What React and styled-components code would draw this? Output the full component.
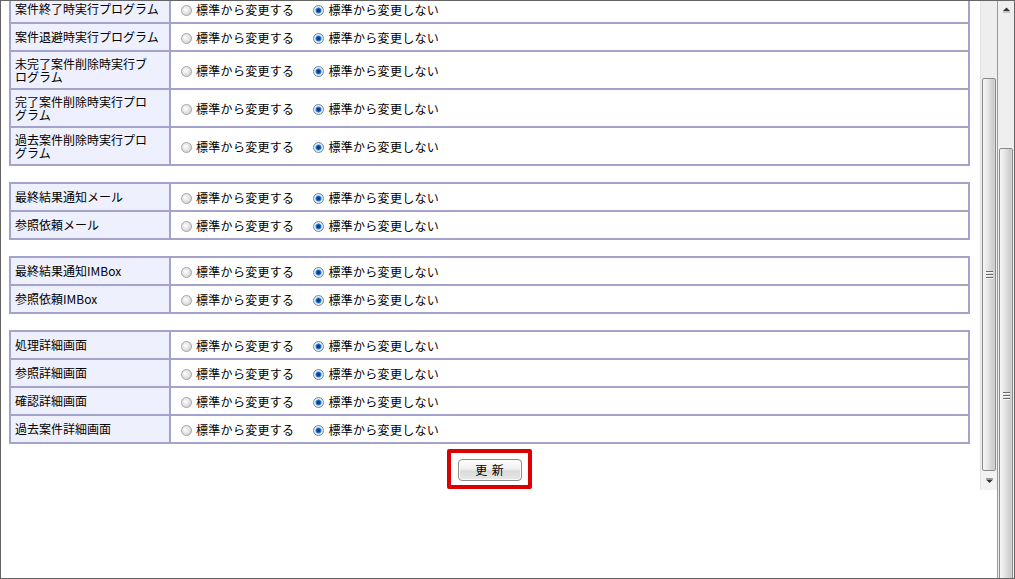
import React from "react";
import styled, { createGlobalStyle } from "styled-components";

const GlobalStyle = createGlobalStyle`
  html, body {
    margin: 0;
    padding: 0;
    background: #ffffff;
  }
  body {
    font-family: "Noto Sans CJK JP", "DejaVu Sans", sans-serif;
    font-size: 12px;
    color: #000;
  }
`;

// groups of settings, labels split where the original wraps
const groups = [
  [
    ["案件終了時実行プログラム"],
    ["案件退避時実行プログラム"],
    ["未完了案件削除時実行ブ", "ログラム"],
    ["完了案件削除時実行プロ", "グラム"],
    ["過去案件削除時実行プロ", "グラム"],
  ],
  [["最終結果通知メール"], ["参照依頼メール"]],
  [["最終結果通知IMBox"], ["参照依頼IMBox"]],
  [["処理詳細画面"], ["参照詳細画面"], ["確認詳細画面"], ["過去案件詳細画面"]],
];

const Window = styled.div`
  width: 1015px;
  height: 579px;
  box-sizing: border-box;
  border: 1px solid #646464;
  display: flex;
  overflow: hidden;
`;

const Page = styled.div`
  flex: 1;
  display: flex;
  flex-direction: column;
  min-width: 0;
`;

const Frame = styled.div`
  height: 489px;
  display: flex;
`;

const Content = styled.div`
  flex: 1;
  overflow: hidden;
  padding: 0 10px 0 8px;
`;

const Scrolled = styled.div`
  margin-top: -7px;
  display: flex;
  flex-direction: column;
  gap: 16px;
`;

const Section = styled.div`
  border: 2px solid #a3a3cb;
  display: flex;
  flex-direction: column;
`;

const Row = styled.div`
  display: grid;
  grid-template-columns: 160px 1fr;
  height: ${(p) => (p.$tall ? 36 : 26)}px;
  & + & {
    border-top: 2px solid #a3a3cb;
  }
`;

const Label = styled.div`
  background: #eef0fd;
  border-right: 2px solid #a3a3cb;
  padding-left: 4px;
  display: flex;
  flex-direction: column;
  justify-content: center;
  white-space: nowrap;
  line-height: ${(p) => (p.$tall ? 13 : 14)}px;
`;

const Options = styled.div`
  display: flex;
  align-items: center;
  padding-left: 10px;
  gap: 19px;
  padding-top: 2px;
`;

const Option = styled.label`
  display: flex;
  align-items: center;
  gap: 4px;
  line-height: 14px;
  white-space: nowrap;
  letter-spacing: 0.3px;
`;

const Radio = styled.span`
  width: 11px;
  height: 11px;
  box-sizing: border-box;
  border-radius: 50%;
  border: 1px solid ${(p) => (p.$checked ? "#6f8aa8" : "#a4a4a4")};
  background: ${(p) =>
    p.$checked
      ? "radial-gradient(circle at 50% 50%, #0b3d86 0 1.2px, #2b7fdc 2.6px, #eaf1f8 3.4px, #c9d2dc 100%)"
      : "radial-gradient(circle at 40% 40%, #ffffff 0, #e6e6e6 45%, #c4c4c4 100%)"};
`;

const ButtonBar = styled.div`
  display: flex;
  justify-content: center;
  margin-top: -11px;
`;

const Highlight = styled.div`
  border: 4px solid #dd0000;
  border-radius: 2px;
  padding: 6px 6px 4px 7px;
`;

const UpdateButton = styled.button`
  width: 64px;
  height: 22px;
  border: 1px solid #8e8e8e;
  border-radius: 4px;
  background: linear-gradient(#ffffff, #f0f0f0 45%, #dadada 55%, #e8e8e8);
  box-shadow: inset 0 0 0 1px #fafafa;
  font-family: "Noto Sans CJK JP", "DejaVu Sans", sans-serif;
  font-size: 12px;
  line-height: 14px;
  color: #000;
  padding: 0;
  letter-spacing: 1px;
`;

const InnerScroll = styled.div`
  width: 16px;
  display: flex;
  flex-direction: column;
  background: #eeeeee;
  border-left: 1px solid #e2e2e2;
`;

const Track = styled.div`
  height: ${(p) => p.$h}px;
  flex: none;
`;

const Thumb = styled.div`
  flex: ${(p) => (p.$h ? "none" : "1")};
  height: ${(p) => (p.$h ? `${p.$h}px` : "auto")};
  margin: 0 1px;
  border: 1px solid #8a8a8a;
  border-radius: 2px;
  background: linear-gradient(to right, #f6f6f6, #e6e6e6 40%, #cbcbcb 85%, #d8d8d8);
  display: flex;
  align-items: center;
  justify-content: center;
`;

const Grip = styled.span`
  width: 7px;
  height: 8px;
  background: repeating-linear-gradient(#6a6a6a 0 1px, #f4f4f4 1px 2px, transparent 2px 3px);
`;

const ArrowButton = styled.div`
  height: ${(p) => p.$h}px;
  flex: none;
  display: flex;
  align-items: center;
  justify-content: center;
  background: ${(p) => (p.$plain ? "transparent" : "#f2f2f2")};
`;

const OuterScroll = styled.div`
  width: 16px;
  display: flex;
  flex-direction: column;
  background: #efefef;
  border-left: 1px solid #9a9a9a;
`;

const Arrow = ({ up }) => (
  <svg width="9" height="6" viewBox="0 0 9 6">
    {up ? (
      <>
        <path d="M1 4 L4.5 0.5 L8 4 Z" fill="#333" />
        <rect x="1" y="4.5" width="7" height="1" fill="#999" />
      </>
    ) : (
      <>
        <rect x="1" y="0" width="7" height="1" fill="#999" />
        <path d="M1 1.5 L8 1.5 L4.5 5 Z" fill="#333" />
      </>
    )}
  </svg>
);

const App = () => {
  return (
    <>
      <GlobalStyle />
      <Window>
        <Page>
          <Frame>
            <Content>
              <Scrolled>
                {groups.map((rows, gi) => (
                  <Section key={gi}>
                    {rows.map((lines) => {
                      const tall = lines.length > 1;
                      return (
                        <Row key={lines.join("")} $tall={tall}>
                          <Label $tall={tall}>
                            {lines.map((l) => (
                              <span key={l}>{l}</span>
                            ))}
                          </Label>
                          <Options>
                            <Option>
                              <Radio />
                              標準から変更する
                            </Option>
                            <Option>
                              <Radio $checked />
                              標準から変更しない
                            </Option>
                          </Options>
                        </Row>
                      );
                    })}
                  </Section>
                ))}
                <ButtonBar>
                  <Highlight>
                    <UpdateButton>更 新</UpdateButton>
                  </Highlight>
                </ButtonBar>
              </Scrolled>
            </Content>
            <InnerScroll>
              <Track $h={77} />
              <Thumb>
                <Grip />
              </Thumb>
              <ArrowButton $h={19}>
                <Arrow />
              </ArrowButton>
            </InnerScroll>
          </Frame>
        </Page>
        <OuterScroll>
          <ArrowButton $h={17} $plain>
            <Arrow up />
          </ArrowButton>
          <Track $h={130} />
          <Thumb $h={494}>
            <Grip />
          </Thumb>
        </OuterScroll>
      </Window>
    </>
  );
};

export default App;
